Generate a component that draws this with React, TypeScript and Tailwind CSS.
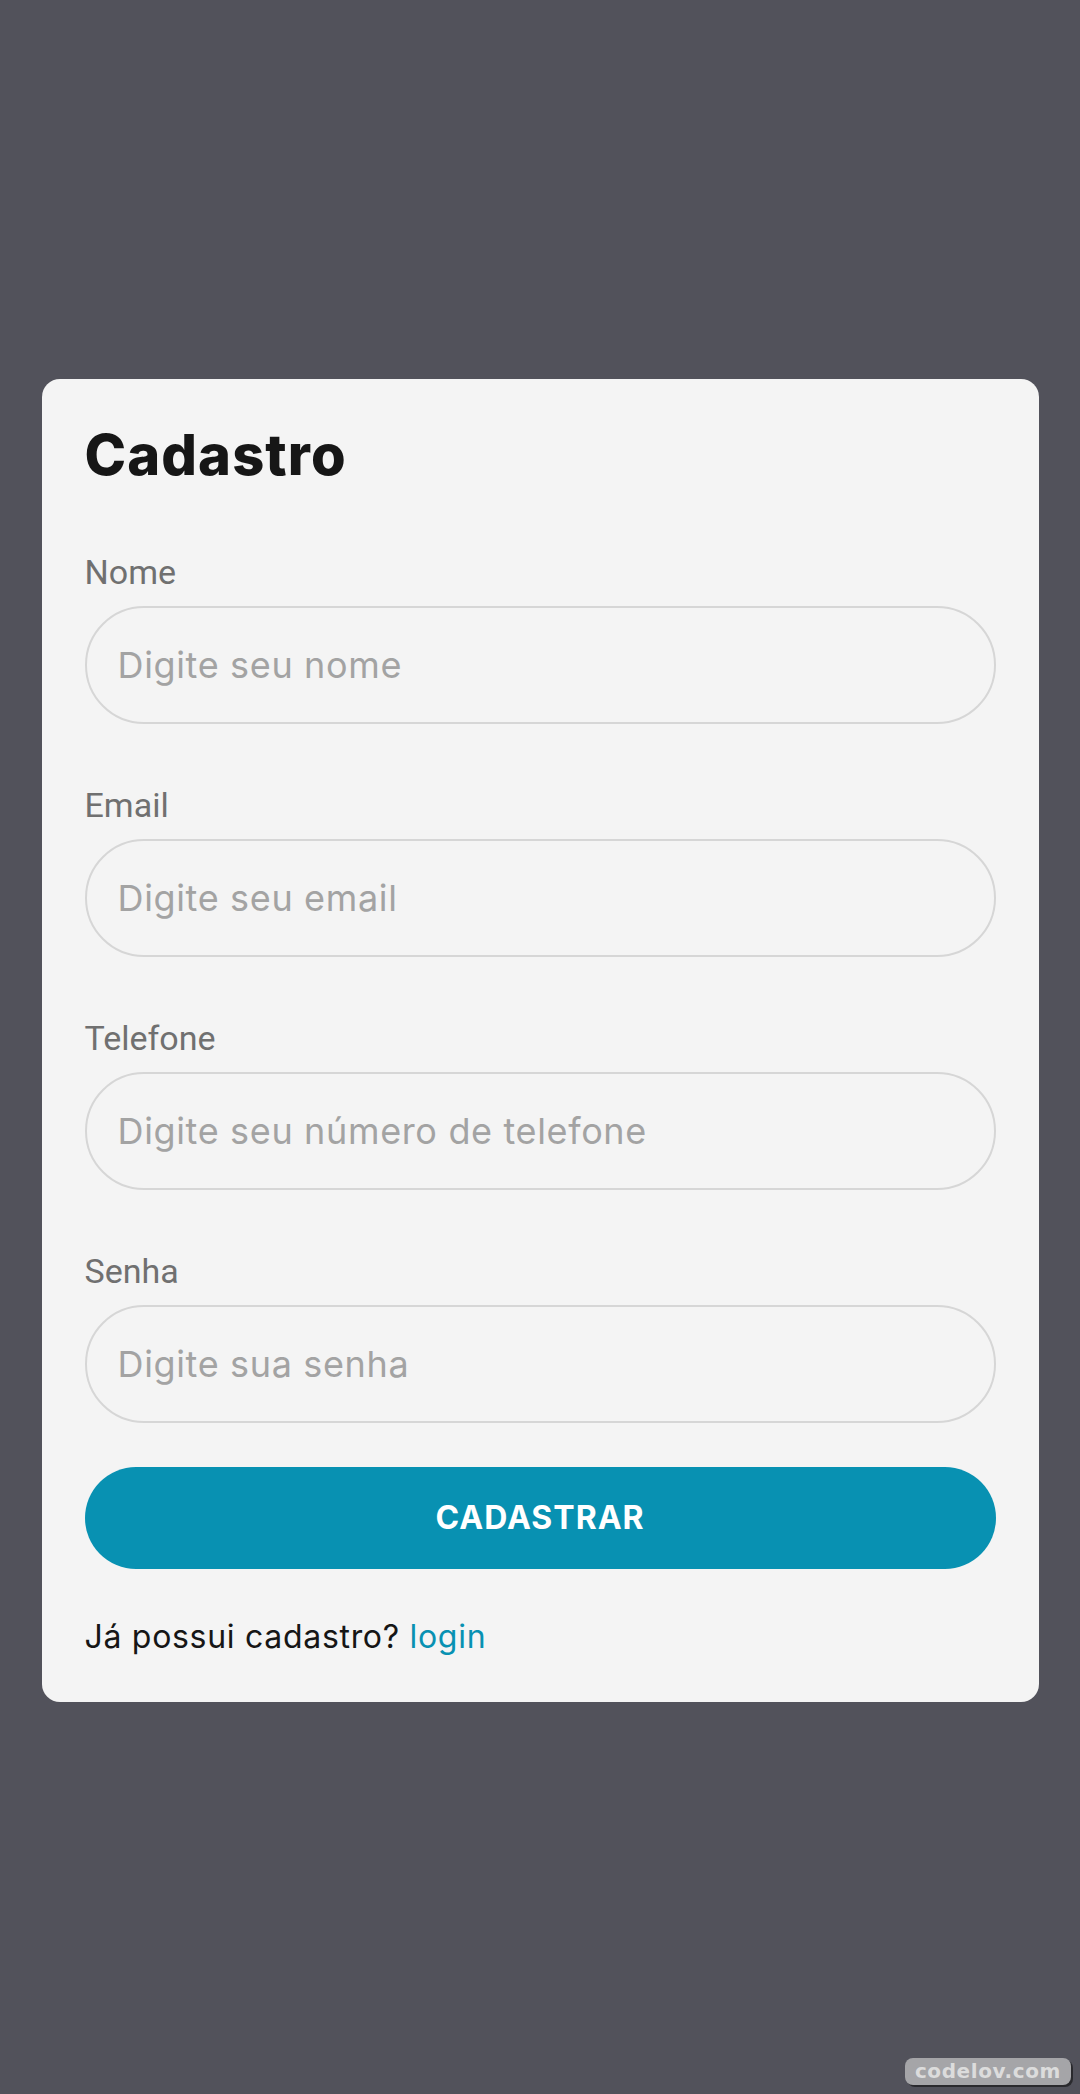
const fields = [
  { label: "Nome", placeholder: "Digite seu nome", type: "text" },
  { label: "Email", placeholder: "Digite seu email", type: "email" },
  { label: "Telefone", placeholder: "Digite seu número de telefone", type: "tel" },
  { label: "Senha", placeholder: "Digite sua senha", type: "password" },
];

const Field = ({ label, placeholder, type }: { label: string; placeholder: string; type: string }) => (
  <div className="flex flex-col">
    <label className="font-['Roboto',sans-serif] text-[34px] leading-none text-[#707070] mb-[17px]">
      {label}
    </label>
    <input
      type={type}
      placeholder={placeholder}
      className="h-[118px] w-full rounded-full border-2 border-[#d6d6d6] bg-transparent pl-[31px] pr-8 font-['Inter',sans-serif] text-[36px] tracking-[0.65px] text-[#333] placeholder:text-[#a3a3a3] outline-none"
    />
  </div>
);

export default function App() {
  return (
    <div className="relative min-h-screen bg-[#52525b] flex items-center justify-center pb-[14px]">
      <div className="w-[997px] rounded-[18px] bg-[#f4f4f4] px-[43px] pt-[48px] pb-[49px]">
        <h1 className="font-['Inter',sans-serif] text-[56px] leading-none font-extrabold tracking-[1.1px] text-[#161616]">
          Cadastro
        </h1>

        <div className="mt-[72px] flex flex-col gap-[64px]">
          {fields.map((f) => (
            <Field key={f.label} {...f} />
          ))}
        </div>

        <button className="mt-[44px] h-[102px] w-full rounded-full bg-[#0891b2] font-['Inter',sans-serif] text-[32px] font-bold tracking-[1px] text-white">
          CADASTRAR
        </button>

        <p className="mt-[52px] font-['Inter',sans-serif] text-[32px] leading-none tracking-[0.7px] text-[#161616]">
          Já possui cadastro? <a className="text-[#0891b2]">login</a>
        </p>
      </div>

      <div className="absolute right-[9px] bottom-[9px] rounded-[8px] bg-[#a5a5a8] px-[10px] py-[2px] leading-[23px] shadow-[2px_2px_0_#2a2a2e] font-['DejaVu_Sans',sans-serif] text-[20px] font-bold tracking-[0.6px] text-[#dcdcdc]">
        codelov.com
      </div>
    </div>
  );
}
